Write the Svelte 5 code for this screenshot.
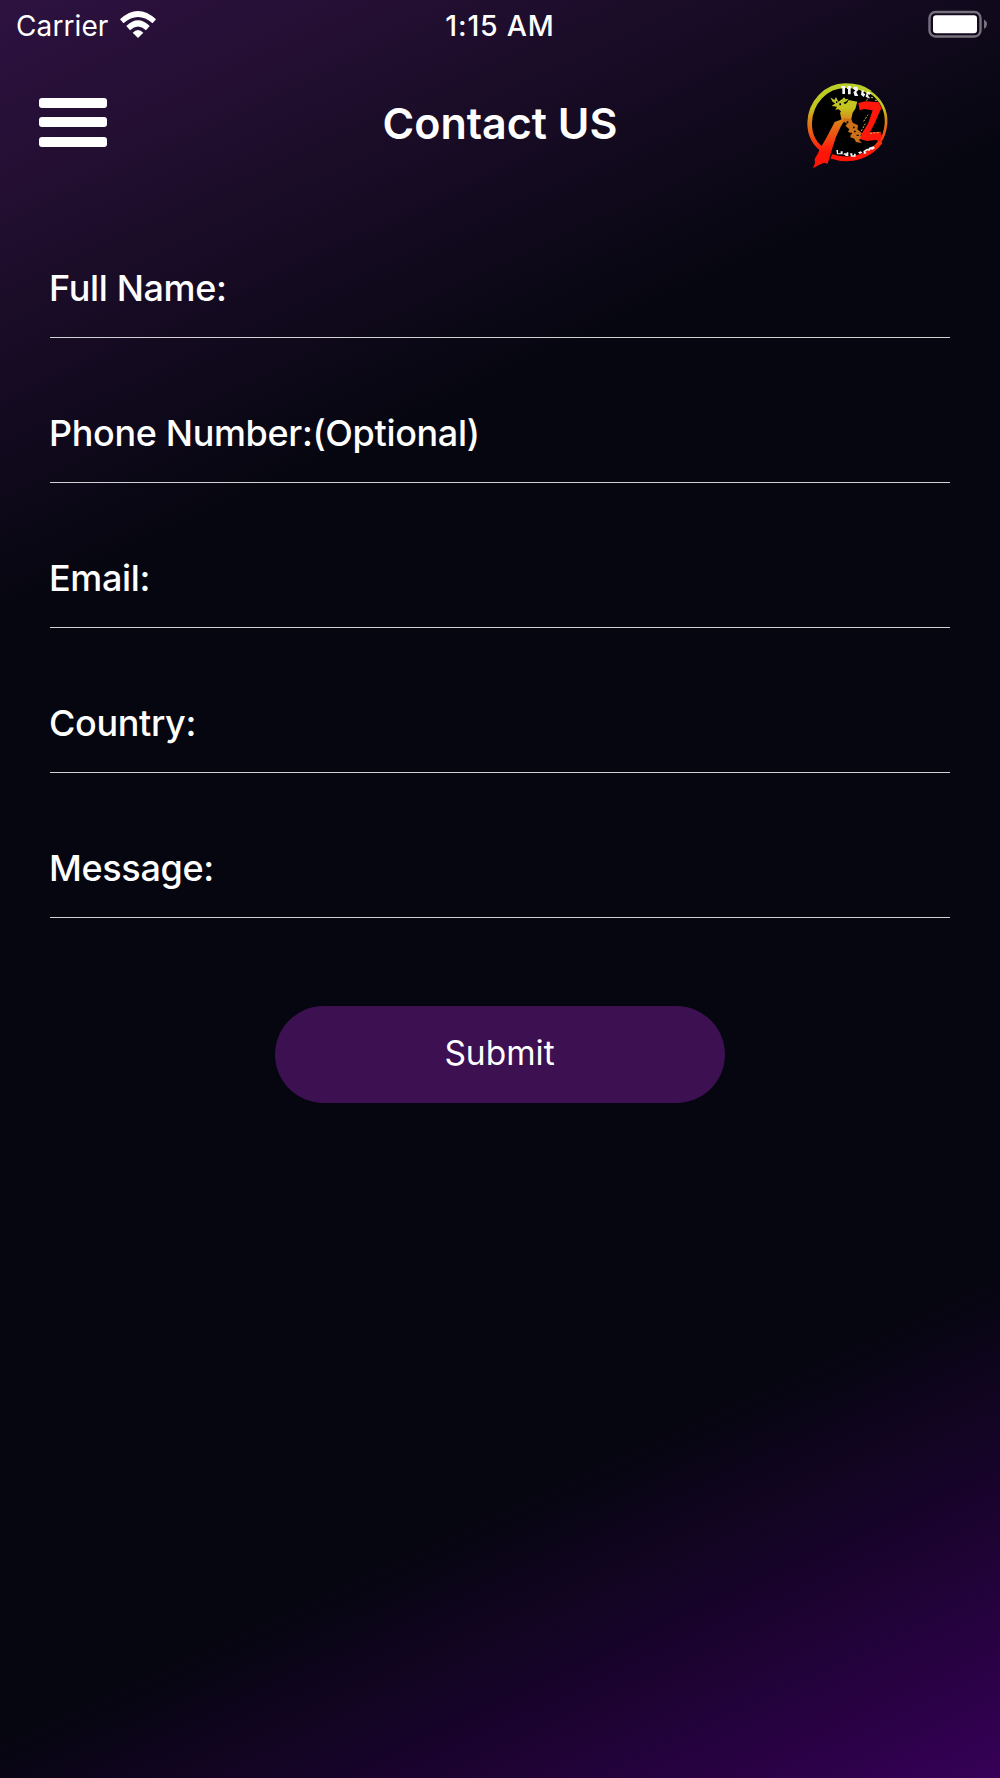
<script lang="ts">
  let form = $state({ name: '', phone: '', email: '', country: '', message: '' });

  const fields = [
    { key: 'name', label: 'Full Name:' },
    { key: 'phone', label: 'Phone Number:(Optional)' },
    { key: 'email', label: 'Email:' },
    { key: 'country', label: 'Country:' },
    { key: 'message', label: 'Message:' }
  ] as const;

  function handleSubmit(event: Event) {
    event.preventDefault();
  }
</script>

<div class="screen">
  <div class="status-bar">
    <div class="carrier">
      <span>Carrier</span>
      <svg width="36" height="27" viewBox="0 0 36 27">
        <path d="M0 8.3 Q18 -8.3 36 8.3 L32.5 12.2 Q18 -0.4 3.5 12.2Z" fill="#fff" />
        <path d="M6.3 15 Q18 3.6 29.7 15 L26 19.2 Q18 11.8 10 19.2Z" fill="#fff" />
        <path d="M12.7 21.8 Q18 16 23.3 21.8 L18 27Z" fill="#fff" />
      </svg>
    </div>
    <span class="time">1:15 AM</span>
    <svg class="battery" width="60" height="30" viewBox="0 0 60 30">
      <rect x="1.5" y="2" width="51" height="24.5" rx="6" fill="none" stroke="#77717d" stroke-width="2.4" />
      <rect x="5" y="5.3" width="44" height="18" rx="3.2" fill="#fff" />
      <path d="M56 9.5 Q59 11.2 59 14.2 Q59 17.2 56 19Z" fill="#77717d" />
    </svg>
  </div>

  <header>
    <button class="menu" aria-label="Menu">
      <span></span>
      <span></span>
      <span></span>
    </button>
    <h1>Contact US</h1>
    <svg class="logo" width="105" height="105" viewBox="0 0 315 315">
      <defs>
        <linearGradient id="fire" gradientUnits="userSpaceOnUse" x1="0" y1="40" x2="0" y2="270">
          <stop offset="0" stop-color="#b9d02b" />
          <stop offset="0.32" stop-color="#c4c41f" />
          <stop offset="0.48" stop-color="#dc8518" />
          <stop offset="0.7" stop-color="#f24a12" />
          <stop offset="0.9" stop-color="#ff1507" />
        </linearGradient>
      </defs>
      <ellipse cx="160" cy="156" rx="113" ry="108" fill="#000" />
      <path d="M94 244 C62 226 46 194 47 158 C49 98 95 47 154 47 C184 47 210 54 228 68" fill="none" stroke="url(#fire)" stroke-width="14" />
      <path d="M228 66 C262 88 279 124 276 162 C274 182 268 202 256 219" fill="none" stroke="url(#fire)" stroke-width="8" />
      <path d="M112 259 C173 280 230 256 260 215" fill="none" stroke="url(#fire)" stroke-width="14" />
      <path d="M160 97 L164 90 L190 95 L184 116 L176 128 L172 147 L150 156 L143 150 L138 128 L146 120 L150 106Z" fill="url(#fire)" />
      <path d="M109 82 L121 90 L126 81 L133 95 L145 87 L150 82 L155 88 L164 86 L158 94 L148 98 L156 104 L150 112 L154 118 L142 126 L134 118 L124 119 L129 110 L113 108 L124 100 L116 96Z" fill="url(#fire)" />
      <path d="M122 156 L144 148 L150 154 L140 170 L126 201 L115 235 L101 281 L90 278 L76 284 L57 295 L63 280 L62 267 L72 250 L76 240 L98 202Z" fill="url(#fire)" />
      <path d="M150 145 L172 147 L176 158 L192 166 L190 178 L204 190 L199 196 L207 205 L194 209 L204 219 L186 216 L181 206 L169 202 L171 190 L162 185 L166 178 L154 167 L160 161 L146 153Z" fill="#cc7118" />
      <path d="M158 154h5v6h-5z M177 170h5v5h-5z M169 188h5v5h-5z M188 194h6v4h-6z M180 182h5v5h-5z M136 100h5v6h-5z M126 94h4v5h-4z" fill="#000" />
      <path d="M193 99 L216 94 L254 97 L263 115 L256 127 L244 156 L228 187 L259 185 L263 198 L259 215 L246 210 L219 213 L198 207 L203 191 L223 159 L236 121 L210 117 L197 121Z" fill="#ff170b" />
      <path d="M218 92 L222 82 L237 83 M243 91 l13 0 M209 154 L222 134 M202 183 L214 161 M228 190 L259 187" fill="none" stroke="#c5bc54" stroke-width="3" stroke-dasharray="6 4" />
      <path d="M142 48h12v7h-1v17h-8V55h-3z M161 48h10v7h-1v18h-8V57h-3z M179 50h11l3 10-6 6 6 12h-11l-4-12 6-4-7-6z M203 60l8 2-3 7 6 4-5 8-8-7z M219 64l12 5-4 5-6-2 6 14-12-6z" fill="#f5f5f5" />
      <path d="M127 240h5v10h8v-6h6v9h-17z M150 250h8v-3h5v11h-9v-4h-6z M168 250h7v6h5v-5h5v9h-14z M192 247l9-3 4 4-8 4z M208 243l11-7 7 2-12 7 4 5-8 2z M225 233l13-4 5 5-9 6-3-3-5 6-5-2z" fill="#f5f5f5" />
    </svg>
  </header>

  <form onsubmit={handleSubmit}>
    {#each fields as field}
      <label class="field">
        <span>{field.label}</span>
        <input type="text" bind:value={form[field.key]} />
      </label>
    {/each}
    <button class="submit" type="submit">Submit</button>
  </form>
</div>

<style>
  :global(body) {
    margin: 0;
    background: #05060f;
  }

  .screen {
    box-sizing: border-box;
    height: 1778px;
    overflow: hidden;
    color: #fff;
    font-family: Inter, 'Liberation Sans', sans-serif;
    background: linear-gradient(155deg, #2d1241 0%, #240f33 8%, #05060f 28%, #05060f 77%, #1b032f 88%, #360057 100%);
  }

  .status-bar {
    display: grid;
    grid-template-columns: 1fr auto 1fr;
    align-items: center;
    height: 50px;
    padding: 0 16px;
    font-size: 28px;
  }

  .carrier {
    display: flex;
    align-items: center;
    gap: 12px;
    margin-top: 1px;
    letter-spacing: 0.1px;
  }

  .carrier svg {
    margin-top: -3px;
  }

  .time {
    font-weight: 500;
    font-size: 28.5px;
    letter-spacing: 0.8px;
  }

  .battery {
    justify-self: end;
    margin-right: -4px;
  }

  header {
    display: grid;
    box-sizing: border-box;
    grid-template-columns: 1fr auto 1fr;
    align-items: center;
    height: 143px;
    padding: 3px 39px 0;
  }

  .menu {
    display: flex;
    flex-direction: column;
    gap: 9.5px;
    width: 67.5px;
    margin-top: -2px;
    padding: 0;
    border: none;
    background: none;
  }

  .menu span {
    height: 10px;
    border-radius: 3px;
    background: #fff;
  }

  h1 {
    margin: 0;
    font-size: 43px;
    font-weight: 600;
  }

  .logo {
    justify-self: end;
    margin-right: 62px;
    margin-top: -1px;
  }

  form {
    display: flex;
    flex-direction: column;
    padding: 0 50px;
  }

  .field {
    display: flex;
    box-sizing: border-box;
    align-items: center;
    height: 145px;
    padding-top: 45px;
    border-bottom: 1px solid #d2d2d5;
    font-size: 36px;
    font-weight: 500;
    letter-spacing: -0.35px;
  }

  .field span {
    margin-left: -1px;
  }

  .field input {
    flex: 1;
    min-width: 0;
    border: none;
    outline: none;
    background: none;
    color: #fff;
    font: inherit;
  }

  .submit {
    align-self: center;
    width: 450px;
    height: 96.5px;
    margin-top: 88px;
    padding: 0 1px 2px 0;
    border: none;
    border-radius: 49px;
    background: #3d1052;
    color: #fff;
    font-family: inherit;
    font-size: 33.5px;
  }
</style>
